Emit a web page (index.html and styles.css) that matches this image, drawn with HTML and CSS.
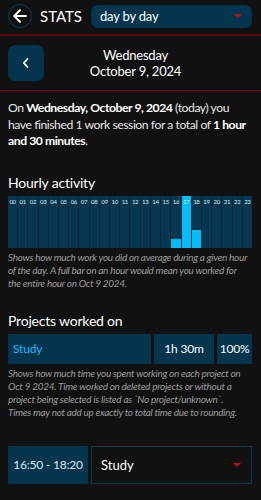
FILE: index.html
```html
<!DOCTYPE html>
<html>
<head>
<meta charset="utf-8">
<link rel="stylesheet" href="styles.css">
</head>
<body>
<header class="topbar">
  <div class="back-circle">
    <svg width="18" height="18" viewBox="0 0 18 18"><path d="M15 9H3.5M9 3.2L3.2 9L9 14.8" fill="none" stroke="#fff" stroke-width="2" stroke-linecap="round" stroke-linejoin="round"/></svg>
  </div>
  <div class="title">STATS</div>
  <div class="select">
    <span>day by day</span>
    <span class="tri"></span>
  </div>
</header>
<section class="datebar">
  <div class="prev-btn">
    <svg width="10" height="12" viewBox="0 0 10 12"><path d="M6.5 2L2.8 6L6.5 10" fill="none" stroke="#fff" stroke-width="1.8" stroke-linecap="round" stroke-linejoin="round"/></svg>
  </div>
  <div class="date">Wednesday<br>October 9, 2024</div>
</section>
<p class="summary">On <b>Wednesday, October 9, 2024</b> (today) you<br>have finished 1 work session for a total of <b>1 hour<br>and 30 minutes</b>.</p>

<h2 class="heading first">Hourly activity</h2>
<div class="chart" id="chart"></div>
<p class="note">Shows how much work you did on average during a given hour<br>of the day. A full bar on an hour would mean you worked for<br>the entire hour on Oct 9 2024.</p>

<h2 class="heading second">Projects worked on</h2>
<div class="proj-row">
  <div class="cell name">Study</div>
  <div class="cell time">1h 30m</div>
  <div class="cell pct">100%</div>
</div>
<p class="note">Shows how much time you spent working on each project on<br>Oct 9 2024. Time worked on deleted projects or without a<br>project being selected is listed as `No project/unknown`.<br>Times may not add up exactly to total time due to rounding.</p>

<div class="session">
  <div class="range">16:50 - 18:20</div>
  <div class="sel2"><span>Study</span><span class="tri"></span></div>
</div>
<script>
  var fills = {16: 17, 17: 100, 18: 33};
  var c = document.getElementById('chart');
  for (var i = 0; i < 24; i++) {
    var col = document.createElement('div');
    col.className = 'col';
    var lab = document.createElement('span');
    lab.className = 'lab';
    lab.textContent = (i < 10 ? '0' : '') + i;
    col.appendChild(lab);
    if (fills[i]) {
      var f = document.createElement('div');
      f.className = 'fill';
      f.style.height = fills[i] + '%';
      col.appendChild(f);
    }
    c.appendChild(col);
  }
</script>
</body>
</html>
```
FILE: styles.css
```css
* { box-sizing: border-box; }
html, body { margin: 0; padding: 0; }
body {
  background: #111111;
  color: #ffffff;
  font-family: "Lato", "Open Sans", sans-serif;
  width: 261px;
  height: 500px;
  overflow: hidden;
}
.topbar {
  display: flex;
  align-items: center;
  height: 36px;
  padding: 0 9px 2px 8px;
  border-bottom: 2px solid #5c0b0b;
}
.back-circle {
  width: 24px;
  height: 24px;
  border-radius: 50%;
  border: 1px solid #0b3c56;
  display: flex;
  align-items: center;
  justify-content: center;
}
.title {
  font-size: 15px;
  margin-left: 8px;
}
.select {
  flex: 1;
  margin-left: 9px;
  height: 23px;
  border-radius: 7px;
  background: #04354f;
  display: flex;
  align-items: center;
  justify-content: space-between;
  padding: 0 10px 0 9px;
  font-size: 13px;
  letter-spacing: -0.2px;
}
.tri {
  width: 0; height: 0;
  border-left: 4px solid transparent;
  border-right: 4px solid transparent;
  border-top: 4px solid #b3121a;
}
.datebar {
  height: 55px;
  border-bottom: 1px solid #6a0c0c;
  display: flex;
  align-items: center;
  padding: 0 8px;
}
.prev-btn {
  width: 36px;
  height: 36px;
  border-radius: 7px;
  background: #04354f;
  display: flex;
  align-items: center;
  justify-content: center;
}
.date {
  flex: 1;
  text-align: center;
  font-size: 13px;
  line-height: 16px;
  margin-right: 26px;
  letter-spacing: -0.2px;
}
.summary {
  margin: 9px 8px 0;
  font-size: 12.2px;
  line-height: 16.5px;
  color: #e6e6e6;
  letter-spacing: -0.45px;
  white-space: nowrap;
}
.summary b { color: #fff; }
.heading {
  font-size: 14px;
  font-weight: 400;
  margin: 0 8px;
  letter-spacing: -0.2px;
}
.heading.first { margin-top: 24px; }
.heading.second { margin-top: 22px; }
.chart {
  margin: 5px 9px 0 8px;
  height: 52px;
  display: grid;
  grid-template-columns: repeat(24, 1fr);
  gap: 1px;
  background: #0a2636;
}
.col {
  position: relative;
  background: #053850;
  display: flex;
  flex-direction: column;
  justify-content: flex-end;
}
.lab {
  position: absolute;
  top: 2px;
  left: 0; right: 0;
  text-align: center;
  font-size: 6px;
  letter-spacing: -0.3px;
  color: #dfe8ee;
}
.fill {
  background: #00bcf8;
}
.note {
  margin: 3px 8px 0;
  font-size: 10px;
  line-height: 13px;
  font-style: italic;
  color: #9c9c9c;
  letter-spacing: -0.3px;
  white-space: nowrap;
}
.proj-row {
  display: flex;
  gap: 3px;
  margin: 5px 9px 0 8px;
  height: 30px;
}
.cell {
  background: #04354f;
  display: flex;
  align-items: center;
  font-size: 12px;
  letter-spacing: -0.2px;
}
.name { flex: 1; color: #1cb8f2; padding-left: 5px; }
.time { width: 60px; justify-content: center; }
.pct { width: 35px; justify-content: center; }
.session {
  display: flex;
  gap: 3px;
  margin: 27px 9px 0 8px;
  height: 38px;
}
.range {
  width: 80px;
  background: #04354f;
  display: flex;
  align-items: center;
  justify-content: center;
  font-size: 12px;
  color: #dfe8ee;
  letter-spacing: -0.2px;
}
.sel2 {
  flex: 1;
  border: 1px solid #0a3a50;
  display: flex;
  align-items: center;
  justify-content: space-between;
  padding: 0 10px 0 9px;
  font-size: 13px;
}
```
